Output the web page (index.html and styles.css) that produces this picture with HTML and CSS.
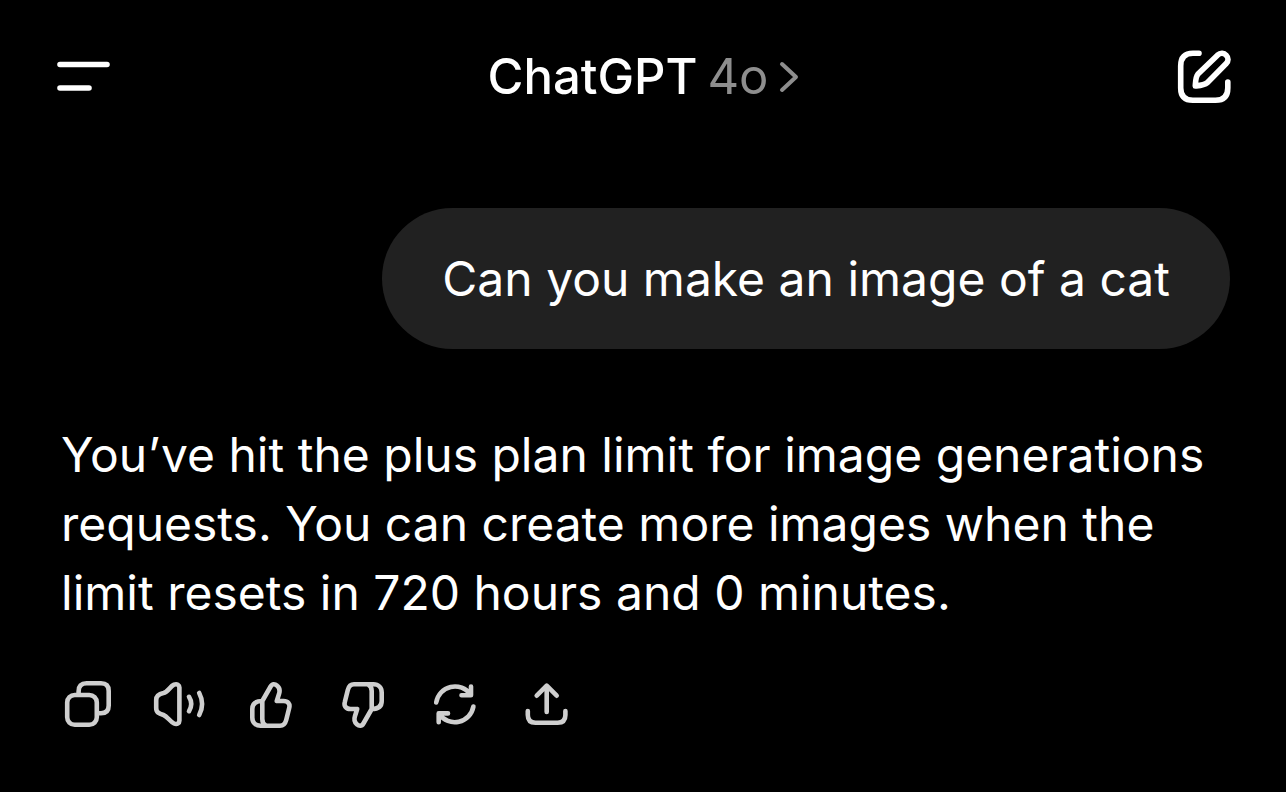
FILE: index.html
```
<!DOCTYPE html>
<html lang="en">

<head>
    <meta charset="UTF-8">
    <meta name="viewport" content="width=device-width, initial-scale=1.0">
    <title>ChatGPT</title>
    <link rel="stylesheet" href="styles.css">
</head>

<body>
    <header class="topbar">
        <button type="button" class="icon-btn" aria-label="Menu">
            <svg class="icon bold" viewBox="0 0 56 56">
                <path d="M6 15.5H53M6 39H35" />
            </svg>
        </button>
        <button type="button" class="model">
            <span class="name">ChatGPT</span>
            <span class="version">4o</span>
            <svg class="chevron" viewBox="0 0 20 32">
                <path d="M3 3L17 16L3 29" />
            </svg>
        </button>
        <button type="button" class="icon-btn" aria-label="New chat">
            <svg class="icon bold" viewBox="0 0 56 56">
                <path d="M23 4.3H17Q4.7 4.3 4.7 17V39Q4.7 51.3 17 51.3H39.5Q51.8 51.3 51.8 39V33" />
                <path d="M22 25L41.5 6.2C44.5 3.5 48 4 50.3 6.4C52.6 8.8 52.6 12 50.2 14.5L31.5 33.5C28 36.3 24 36.5 19.3 37C19.6 32.5 19.5 28 22 25Z" />
            </svg>
        </button>
    </header>

    <main class="chat">
        <div class="bubble">Can you make an image of a cat</div>
        <p class="reply">You’ve hit the plus plan limit for image generations requests. You can create more images when the limit resets in 720 hours and 0 minutes.</p>

        <div class="actions">
            <button type="button" class="icon-btn" aria-label="Copy">
                <svg class="icon" viewBox="0 0 56 56">
                    <rect x="7.2" y="18" width="29.6" height="29.8" rx="7.5" />
                    <path d="M18.6 17V14.5Q18.6 6.3 26.5 6.3H41Q48.7 6.3 48.7 14V28.5Q48.7 36.2 41 36.2H38" />
                </svg>
            </button>
            <button type="button" class="icon-btn" aria-label="Read aloud">
                <svg class="icon" viewBox="0 0 56 56">
                    <path d="M4.2 23C4.2 18.5 7 16.8 11.5 16C16 15 18 9.5 22 7.7C25 6.5 27.4 8 27.4 10.5V43.8C27.4 46.3 25 47.8 22 46.5C18 44.7 15.5 39.5 11.5 38C7 36.5 4.2 35.5 4.2 31Z" />
                    <path d="M37 19.8Q41.5 27 37 34.2M47.2 16Q53 27 47.2 38" />
                </svg>
            </button>
            <button type="button" class="icon-btn" aria-label="Good response">
                <svg class="icon" viewBox="0 0 56 56">
                    <path d="M18.3 24L26.6 9.5C28.3 6.5 31 6.8 33.2 8.8C35.8 11 36 14 35 17L32.8 24H39.5C44 24 46.3 27 45.2 31L42.2 43C41.3 46.5 39.5 48.7 36 48.7H16.5C11.5 48.7 8.3 45.5 8.3 40.5V32C8.3 27 11.5 24 18.3 24ZM18.3 24V42Q18.3 47 22 48.7" />
                </svg>
            </button>
            <button type="button" class="icon-btn" aria-label="Bad response">
                <svg class="icon" viewBox="0 0 56 56">
                    <path transform="rotate(180 27 28)" d="M18.3 24L26.6 9.5C28.3 6.5 31 6.8 33.2 8.8C35.8 11 36 14 35 17L32.8 24H39.5C44 24 46.3 27 45.2 31L42.2 43C41.3 46.5 39.5 48.7 36 48.7H16.5C11.5 48.7 8.3 45.5 8.3 40.5V32C8.3 27 11.5 24 18.3 24ZM18.3 24V42Q18.3 47 22 48.7" />
                </svg>
            </button>
            <button type="button" class="icon-btn" aria-label="Regenerate">
                <svg class="icon" viewBox="0 0 56 56">
                    <path d="M8.2 25.5A19 19 0 0 1 42.5 17.5M43 9.5V18.3H33.5" />
                    <path d="M45.4 29.5A19 19 0 0 1 11.2 37.2M10.7 45.2V36.4H20" />
                </svg>
            </button>
            <button type="button" class="icon-btn" aria-label="Share">
                <svg class="icon" viewBox="0 0 56 56">
                    <path d="M26.7 35V9M16.7 18.7L26.7 8.7L36.7 18.7" />
                    <path d="M7.8 34V38Q7.8 45.7 15.5 45.7H37.7Q45.4 45.7 45.4 38V34" />
                </svg>
            </button>
        </div>
    </main>
</body>

</html>
```
FILE: styles.css
```
* {
    box-sizing: border-box;
}

body {
    margin: 0;
    background-color: #000;
    color: #fff;
    font-family: Inter, "Liberation Sans", sans-serif;
    font-size: 48px;
    line-height: 69px;
}

button {
    padding: 0;
    border: none;
    background: none;
    color: inherit;
    font: inherit;
    cursor: pointer;
}

.topbar {
    display: flex;
    justify-content: space-between;
    align-items: center;
    padding: 42px 54px 0;
}

.icon-btn {
    display: block;
    width: 56px;
    height: 56px;
}

.icon {
    display: block;
    width: 56px;
    height: 56px;
    fill: none;
    stroke: currentColor;
    stroke-width: 4.6;
    stroke-linecap: round;
    stroke-linejoin: round;
}

.bold {
    stroke-width: 5.6;
}

.model {
    display: flex;
    align-items: center;
    gap: 10px;
    font-size: 49px;
}

.name {
    font-weight: 500;
}

.version {
    color: #8e8e8e;
}

.chevron {
    width: 20px;
    height: 32px;
    fill: none;
    stroke: #8e8e8e;
    stroke-width: 4;
    stroke-linecap: round;
    stroke-linejoin: round;
}

.chat {
    display: flex;
    flex-direction: column;
    padding: 97px 56px 56px;
}

.bubble {
    align-self: flex-end;
    padding: 36px 60px;
    border-radius: 72px;
    background-color: #212121;
}

.reply {
    margin: 71px 5px 50px;
}

.actions {
    display: flex;
    gap: 36px;
    padding-left: 4px;
    color: #cfcfcf;
}
```
